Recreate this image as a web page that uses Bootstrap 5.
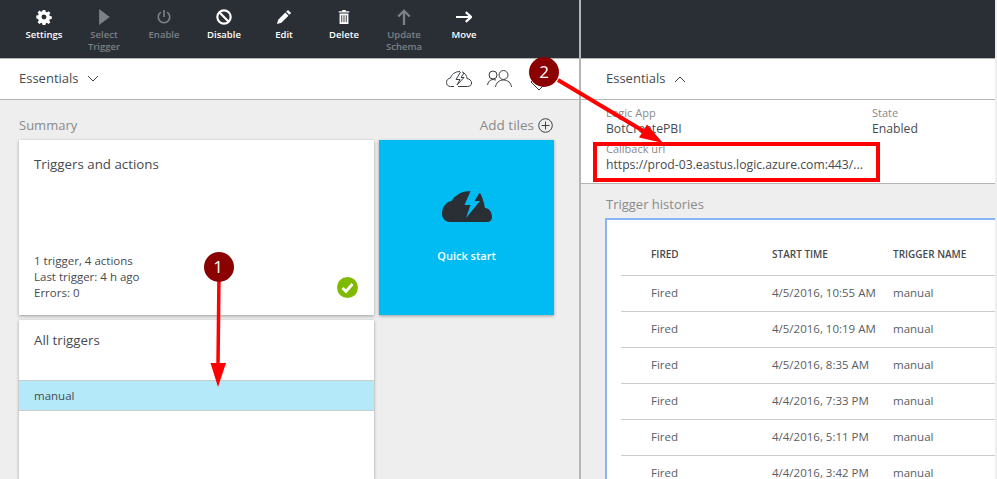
<!DOCTYPE html>
<html>
<head>
    <title>Logic App</title>
    <link rel="stylesheet" href="https://cdn.jsdelivr.net/npm/bootstrap@5.3.2/dist/css/bootstrap.min.css">
    <style>
        html, body { height: 479px; overflow: hidden; }
        body { background: #eee; font-family: "Open Sans", "Noto Sans", sans-serif; color: #474a4f; position: relative; width: 997px; }
        .page-wrap { height: 479px; }
        .left-pane { width: 579px; flex: none; }
        .right-pane { width: 416px; flex: none; border-left: 2px solid #b4b4b4; }
        .tool-bar { height: 59px; flex: none; background: #2a2f36; border-bottom: 1px solid #b4b4b4; padding-left: 14px; }
        .tool-item { width: 60px; text-align: center; font-size: 9.500px; line-height: 12px; font-weight: 600; color: #fff; padding-top: 8px; }
        .tool-item.off { color: #7d8085; }
        .tool-item svg { display: block; margin: 1px auto 4px; width: 16px; height: 16px; }
        .ess-bar { height: 41px; flex: none; background: #fff; border-bottom: 1px solid #b4b4b4; font-size: 13px; padding-left: 19px; }
        .right-pane .ess-bar { padding-left: 25px; }
        .ess-icons { padding-right: 31px; }
        .ess-icons svg + svg { margin-left: 15px; }
        .ess-icons .tag-icon { margin-left: 18px; margin-top: 5px; }
        .sec-title { font-size: 13px; color: #8a8a8a; line-height: 18px; flex: none; }
        .add-label { font-size: 13.500px; }
        .sum-row { padding: 16px 26px 6px 19px; }
        .tile-grid { display: grid; grid-template-columns: 355px 175px; grid-template-rows: 175px 159px; gap: 5px; margin-left: 19px; flex: none; }
        .tile { background: #fff; box-shadow: 0 1px 3px rgba(0,0,0,.35); }
        .tile-main { padding: 15px; position: relative; }
        .tile-head { font-size: 13.300px; line-height: 18px; }
        .tile-stat { font-size: 11.500px; line-height: 16px; position: absolute; left: 15px; bottom: 14px; }
        .ok-mark { position: absolute; right: 16px; bottom: 17px; width: 21px; height: 21px; }
        .quick-tile { background: #00bcf2; color: #fff; font-size: 11px; font-weight: 600; text-align: center; padding-top: 50px; box-shadow: 0 1px 3px rgba(0,0,0,.35); }
        .quick-tile svg { display: block; margin: 0 auto 26px; }
        .trigger-tile { padding-top: 11px; }
        .trigger-tile .tile-head { padding-left: 15px; height: 49px; }
        .trigger-row { height: 31px; background: #b3e9f9; border-top: 1px solid #ccc; border-bottom: 1px solid #ccc; font-size: 11.500px; padding-left: 15px; line-height: 29px; }
        .ess-body { background: #fff; height: 84px; flex: none; border-bottom: 1px solid #b4b4b4; padding: 5px 0 0 25px; }
        .ess-col { width: 266px; flex: none; }
        .ess-label { font-size: 11px; line-height: 16px; color: #8a8a8a; }
        .ess-val { font-size: 12.200px; line-height: 16px; height: 20px; }
        .hist-title { padding: 11px 0 5px 25px; }
        .hist-panel { margin-left: 24px; background: #fff; border-top: 2px solid #8ab4f8; border-left: 2px solid #8ab4f8; height: 261px; padding: 17px 0 0 14px; overflow: hidden; flex: none; }
        .hist-table { width: 400px; table-layout: fixed; font-size: 11.500px; margin: 0; }
        .hist-table th { font-size: 10px; font-weight: 600; height: 38px; padding: 0 0 2px; vertical-align: middle; border-bottom: 1px solid #ccc; color: #474a4f; background: none; }
        .hist-table td { height: 36px; line-height: 14px; padding: 0; vertical-align: middle; border-bottom: 1px solid #ccc; color: #5a5d61; background: none; }
        .cell-first { padding-left: 30px !important; width: 151px; }
        .cell-time { width: 121px; }
        .mark-layer { position: absolute; left: 0; top: 0; pointer-events: none; }
        .mark-num { font-family: "Open Sans", sans-serif; font-size: 17px; fill: #fff; text-anchor: middle; }
    </style>
</head>
<body>
<div class="d-flex page-wrap">
    <div class="left-pane d-flex flex-column">
        <div class="tool-bar d-flex">
            <div class="tool-item">
                <svg viewBox="0 0 18 18"><path fill="#fff" d="M7.500 1h3l.4 2.200 1.300.6 1.900-1.300 2.100 2.100-1.300 1.900.6 1.300 2.200.4v3l-2.200.4-.6 1.300 1.300 1.900-2.100 2.100-1.900-1.300-1.300.6-.4 2.200h-3l-.4-2.200-1.300-.6-1.900 1.300-2.100-2.100 1.300-1.900-.6-1.300L.3 10.400v-3l2.200-.4.6-1.300-1.300-1.900 2.100-2.100 1.900 1.300 1.300-.6zM9 6.200a2.800 2.800 0 1 0 0 5.600 2.800 2.800 0 0 0 0-5.600z" fill-rule="evenodd"/></svg>
                Settings
            </div>
            <div class="tool-item off">
                <svg viewBox="0 0 18 18"><path fill="#7d8085" d="M3.500 0l12 9-12 9z"/></svg>
                Select Trigger
            </div>
            <div class="tool-item off">
                <svg viewBox="0 0 18 18"><path fill="none" stroke="#7d8085" stroke-width="1.800" d="M9 1v8M5.500 3.500a6.500 6.500 0 1 0 7 0"/></svg>
                Enable
            </div>
            <div class="tool-item">
                <svg viewBox="0 0 18 18"><circle cx="9" cy="9" r="7.500" fill="none" stroke="#fff" stroke-width="2.400"/><path stroke="#fff" stroke-width="2.400" d="M4 4l10 10"/></svg>
                Disable
            </div>
            <div class="tool-item">
                <svg viewBox="0 0 18 18"><path fill="#fff" d="M13.500 1l3.500 3.500-2 2L11.500 3zM10.500 4l3.500 3.500-8 8L1 17l1.500-5z"/></svg>
                Edit
            </div>
            <div class="tool-item">
                <svg viewBox="0 0 18 18"><path fill="#fff" d="M7 1h4v1.500h4V4H3V2.500h4zM4 5h10v12H4zm2 2v8h1V7zm2.500 0v8h1V7zM11 7v8h1V7z" fill-rule="evenodd"/></svg>
                Delete
            </div>
            <div class="tool-item off">
                <svg viewBox="0 0 18 18"><path fill="none" stroke="#7d8085" stroke-width="2.600" d="M9 18V2M2.500 8.500L9 2l6.500 6.500"/></svg>
                Update Schema
            </div>
            <div class="tool-item">
                <svg viewBox="0 0 18 18"><path fill="none" stroke="#fff" stroke-width="2.400" d="M0 9h17M11 3.500L17 9l-6 5.500"/></svg>
                Move
            </div>
        </div>
        <div class="ess-bar d-flex align-items-center">
            <span>Essentials</span>
            <svg class="ms-2" width="12" height="8" viewBox="0 0 12 8"><path fill="none" stroke="#3c3f43" d="M1 1l5 5 5-5"/></svg>
            <div class="ms-auto d-flex align-items-center ess-icons">
                <svg width="26" height="16" viewBox="0 0 26 16"><path fill="none" stroke="#3c3f43" d="M8 15.500H4.500C2 15.500.5 13.500.5 11.500.5 9 2 7.500 4.500 7 5.500 3.500 9 .5 14 .5M16 .8c3 1.200 5 4.200 5 6.700 3 .5 4.500 2.500 4.500 4.500s-1.500 3.500-4 3.500H12M14.500 1L10 8.500h4L11 14l7-7.500h-3L18 2"/></svg>
                <svg width="25" height="18" viewBox="0 0 25 18"><g fill="none" stroke="#3c3f43"><circle cx="16.500" cy="5" r="4.500"/><circle cx="6" cy="5" r="4"/><path d="M8.500 17c.5-4 3.500-7 8-7s7.500 3 8 7M.5 15c.5-3 2.500-5.500 5.500-5.500l3 .5"/></g></svg>
                <svg class="tag-icon" width="18" height="18" viewBox="0 0 18 18"><path fill="none" stroke="#3c3f43" d="M1 9l7-7h8v8l-7 7z"/></svg>
            </div>
        </div>
        <div class="d-flex justify-content-between align-items-center sec-title sum-row">
            <span>Summary</span>
            <span class="d-flex align-items-center gap-1 add-label">Add tiles
                <svg width="15" height="15" viewBox="0 0 15 15"><circle cx="7.500" cy="7.500" r="6.800" fill="none" stroke="#3c3f43"/><path stroke="#3c3f43" d="M7.500 3.500v8M3.500 7.500h8"/></svg>
            </span>
        </div>
        <div class="tile-grid">
            <div class="tile tile-main">
                <div class="tile-head">Triggers and actions</div>
                <div class="tile-stat">1 trigger, 4 actions<br>Last trigger: 4 h ago<br>Errors: 0</div>
                <svg class="ok-mark" viewBox="0 0 21 21"><circle cx="10.500" cy="10.500" r="10.500" fill="#7fba00"/><path fill="none" stroke="#fff" stroke-width="2.800" d="M5.500 11l3.500 3.500 6.500-7.500"/></svg>
            </div>
            <div class="quick-tile">
                <svg width="50" height="32" viewBox="0 0 50 32"><path fill="#2a2f36" d="M8 32C3 32 0 28 0 23.500 0 17 4 12 9.500 11 12 6 19 1 29 1l9 2c2 3 4 9 5 15 4 0 7 4 7 9 0 3-2 5-5 5z"/><path fill="#00bcf2" d="M29 0l-6.500 15h6L24 28l14-17h-5.500L38 2V0z"/></svg>
                Quick start
            </div>
            <div class="tile trigger-tile">
                <div class="tile-head">All triggers</div>
                <div class="trigger-row">manual</div>
            </div>
        </div>
    </div>
    <div class="right-pane d-flex flex-column">
        <div class="tool-bar"></div>
        <div class="ess-bar d-flex align-items-center">
            <span>Essentials</span>
            <svg class="ms-2" width="12" height="8" viewBox="0 0 12 8"><path fill="none" stroke="#3c3f43" d="M1 7l5-5 5 5"/></svg>
        </div>
        <div class="ess-body">
            <div class="d-flex">
                <div class="ess-col"><div class="ess-label">Logic App</div><div class="ess-val">BotCreatePBI</div></div>
                <div><div class="ess-label">State</div><div class="ess-val">Enabled</div></div>
            </div>
            <div class="ess-label">Callback url</div>
            <div class="ess-val">https://prod-03.eastus.logic.azure.com:443/...</div>
        </div>
        <div class="sec-title hist-title">Trigger histories</div>
        <div class="hist-panel">
            <table class="table hist-table">
                <thead>
                    <tr><th class="cell-first">FIRED</th><th class="cell-time">START TIME</th><th>TRIGGER NAME</th></tr>
                </thead>
                <tbody>
                    <tr><td class="cell-first">Fired</td><td>4/5/2016, 10:55 AM</td><td>manual</td></tr>
                    <tr><td class="cell-first">Fired</td><td>4/5/2016, 10:19 AM</td><td>manual</td></tr>
                    <tr><td class="cell-first">Fired</td><td>4/5/2016, 8:35 AM</td><td>manual</td></tr>
                    <tr><td class="cell-first">Fired</td><td>4/4/2016, 7:33 PM</td><td>manual</td></tr>
                    <tr><td class="cell-first">Fired</td><td>4/4/2016, 5:11 PM</td><td>manual</td></tr>
                    <tr><td class="cell-first">Fired</td><td>4/4/2016, 3:42 PM</td><td>manual</td></tr>
                </tbody>
            </table>
        </div>
    </div>
</div>
<svg class="mark-layer" width="997" height="479" viewBox="0 0 997 479">
    <rect x="595" y="144" width="283" height="36" fill="none" stroke="#f00" stroke-width="4"/>
    <path stroke="#f00" stroke-width="3.500" fill="none" d="M219 275L218 365"/>
    <path fill="#f00" d="M210.500 363h15.500l-8 24z"/>
    <path stroke="#f00" stroke-width="4" fill="none" d="M558 80L645 132"/>
    <path fill="#f00" d="M663 143l-24-5.500 8-13z"/>
    <circle cx="219" cy="267" r="15" fill="#8b0000"/>
    <text class="mark-num" x="218" y="273">1</text>
    <circle cx="544" cy="72" r="15" fill="#8b0000"/>
    <text class="mark-num" x="544" y="78">2</text>
</svg>
<script src="https://cdn.jsdelivr.net/npm/bootstrap@5.3.2/dist/js/bootstrap.bundle.min.js"></script>
</body>
</html>
